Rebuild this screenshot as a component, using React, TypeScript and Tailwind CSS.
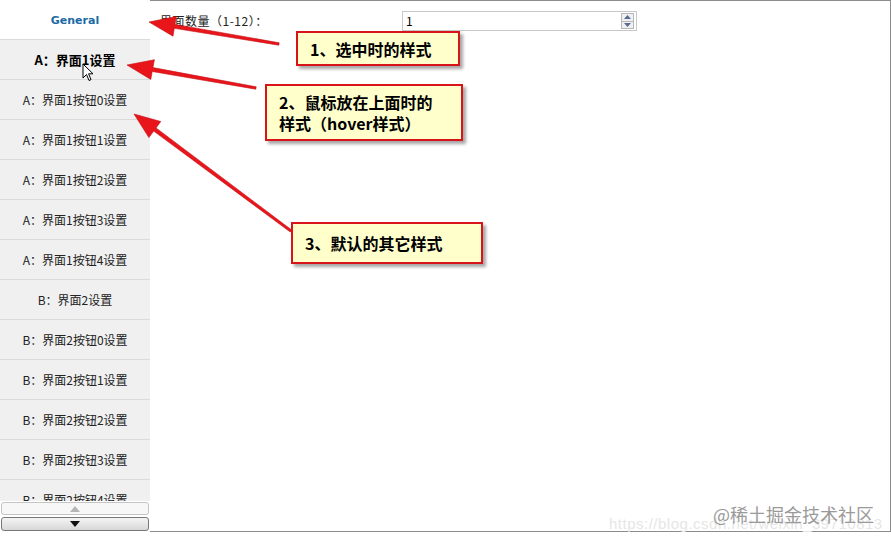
import React from 'react';

const items: { label: string; kind?: 'active' | 'hover' }[] = [
    { label: 'General', kind: 'active' },
    { label: 'A：界面1设置', kind: 'hover' },
    { label: 'A：界面1按钮0设置' },
    { label: 'A：界面1按钮1设置' },
    { label: 'A：界面1按钮2设置' },
    { label: 'A：界面1按钮3设置' },
    { label: 'A：界面1按钮4设置' },
    { label: 'B：界面2设置' },
    { label: 'B：界面2按钮0设置' },
    { label: 'B：界面2按钮1设置' },
    { label: 'B：界面2按钮2设置' },
    { label: 'B：界面2按钮3设置' },
    { label: 'B：界面2按钮4设置' },
];

// 红色箭头 (tail -> tip)
const arrows = [
    { tail: [279, 44], tip: [149, 22] },
    { tail: [256, 88], tip: [127, 65] },
    { tail: [291, 231], tip: [134, 114] },
];

function arrowShape(tail: number[], tip: number[]) {
    const dx = tip[0] - tail[0];
    const dy = tip[1] - tail[1];
    const len = Math.sqrt(dx * dx + dy * dy);
    const ux = dx / len, uy = dy / len;
    const nx = -uy, ny = ux;
    const headLen = 26, headW = 10, shaft = 2;
    const bx = tip[0] - ux * headLen, by = tip[1] - uy * headLen;
    const pts = [
        [tail[0] + nx * shaft * 0.6, tail[1] + ny * shaft * 0.6],
        [bx + nx * shaft, by + ny * shaft],
        [bx + nx * headW, by + ny * headW],
        [tip[0], tip[1]],
        [bx - nx * headW, by - ny * headW],
        [bx - nx * shaft, by - ny * shaft],
        [tail[0] - nx * shaft * 0.6, tail[1] - ny * shaft * 0.6],
    ];
    return pts.map(p => `${p[0].toFixed(1)},${p[1].toFixed(1)}`).join(' ');
}

export default function App() {
    return (
        <div className="relative w-[891px] h-[539px] bg-white overflow-hidden" style={{ fontFamily: '"Noto Sans CJK SC", "DejaVu Sans", sans-serif' }}>
            <div className="flex h-[532px]">
                {/* 左侧导航 */}
                <div className="w-[150px] h-full flex flex-col bg-[#f0f0f0]">
                    <div className="flex-1 overflow-hidden">
                        {items.map((it, i) => (
                            <div
                                key={i}
                                className={
                                    it.kind === 'active'
                                        ? 'h-[40px] flex items-center justify-center bg-white border-b border-[#dadada] pt-[3px]'
                                        : 'h-[40px] flex items-center justify-center border-b border-[#dadada] text-[12px] text-[#222]'
                                }
                            >
                                {it.kind === 'active' ? (
                                    <span className="text-[11px] font-bold text-[#1a6aa5]" style={{ fontFamily: '"DejaVu Sans", sans-serif' }}>{it.label}</span>
                                ) : it.kind === 'hover' ? (
                                    <span className="text-[13px] font-bold text-black">{it.label}</span>
                                ) : (
                                    <span>{it.label}</span>
                                )}
                            </div>
                        ))}
                    </div>
                    <div className="flex flex-col gap-[2px] px-[1px] pb-[1px] bg-white pt-[1px]">
                        <button className="h-[13px] rounded-[3px] border border-[#c4c4c4] bg-[#f7f7f7] flex items-center justify-center">
                            <svg width="10" height="6" viewBox="0 0 10 6"><path d="M5 0 L10 6 L0 6 Z" fill="#b5b5b5" /></svg>
                        </button>
                        <button className="h-[14px] rounded-[3px] border border-[#777] bg-gradient-to-b from-[#f4f4f4] to-[#d8d8d8] flex items-center justify-center">
                            <svg width="10" height="6" viewBox="0 0 10 6"><path d="M0 0 L10 0 L5 6 Z" fill="#111" /></svg>
                        </button>
                    </div>
                </div>

                {/* 右侧内容 */}
                <div className="flex-1 h-full border-t border-b border-r border-[#8c8c8c]">
                    <div className="flex items-center pt-[10px] pl-[10px]">
                        <span className="w-[242px] text-[12px] text-[#222] tracking-[0.5px]">界面数量（1-12）：</span>
                        <div className="w-[235px] h-[20px] border border-[#c8c8c8] flex items-center justify-between pl-[3px] pr-[2px]">
                            <span className="text-[12px] text-black">1</span>
                            <div className="w-[13px] h-[16px] flex flex-col border border-[#b8b8b8]">
                                <div className="flex-1 flex items-center justify-center bg-[#eef0f4] border-b border-[#b8b8b8]">
                                    <svg width="7" height="4" viewBox="0 0 7 4"><path d="M3.5 0 L7 4 L0 4 Z" fill="#5a6a8a" /></svg>
                                </div>
                                <div className="flex-1 flex items-center justify-center bg-[#eef0f4]">
                                    <svg width="7" height="4" viewBox="0 0 7 4"><path d="M0 0 L7 0 L3.5 4 Z" fill="#5a6a8a" /></svg>
                                </div>
                            </div>
                        </div>
                    </div>
                </div>
            </div>

            {/* 鼠标指针 */}
            <svg className="absolute left-[82px] top-[63px]" width="12" height="19" viewBox="0 0 12 19">
                <path d="M1 1 L1 15 L4.5 11.5 L7 17.5 L9 16.6 L6.6 10.8 L11 10.8 Z" fill="white" stroke="black" strokeWidth="1" strokeLinejoin="round" />
            </svg>

            {/* 红色箭头 */}
            <svg className="absolute left-0 top-0 pointer-events-none" width="891" height="539">
                {arrows.map((a, i) => (
                    <polygon key={i} points={arrowShape(a.tail, a.tip)} fill="#e8151b" stroke="#c40d12" strokeWidth="0.6" strokeLinejoin="round" />
                ))}
            </svg>

            {/* 标注框 */}
            <div className="absolute left-[296px] top-[31px] w-[164px] h-[35px] bg-[#ffffcc] border-2 border-[#d8141a] shadow-[3px_3px_3px_rgba(0,0,0,0.35)] flex items-center pl-[12px] text-[16px] font-bold text-black">
                1、选中时的样式
            </div>
            <div className="absolute left-[265px] top-[84px] w-[198px] h-[57px] bg-[#ffffcc] border-2 border-[#d8141a] shadow-[3px_3px_3px_rgba(0,0,0,0.35)] flex flex-col justify-center pl-[12px] text-[16px] leading-[21px] font-bold text-black">
                <span>2、鼠标放在上面时的</span>
                <span>样式（hover样式）</span>
            </div>
            <div className="absolute left-[291px] top-[222px] w-[192px] h-[42px] bg-[#ffffcc] border-2 border-[#d8141a] shadow-[3px_3px_3px_rgba(0,0,0,0.35)] flex items-center pl-[12px] text-[16px] font-bold text-black">
                3、默认的其它样式
            </div>

            {/* 水印 */}
            <div className="absolute left-[609px] top-[513px] text-[15px] text-[#e6e6e6] tracking-[0.5px]" style={{ fontFamily: '"Liberation Sans", sans-serif' }}>
                https://blog.csdn.net/weixin_39710813
            </div>
            <div className="absolute left-[713px] top-[501px] text-[18px] text-[#9a9a9a]">
                @稀土掘金技术社区
            </div>
        </div>
    );
}
